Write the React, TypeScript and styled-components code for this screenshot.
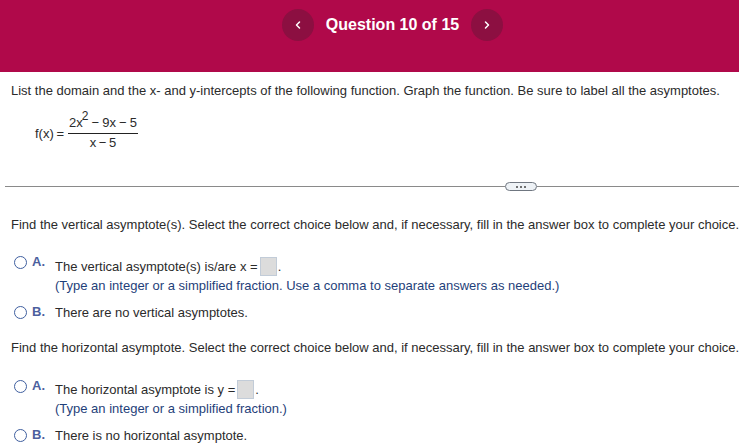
import { createGlobalStyle } from "styled-components";
import styled from "styled-components";
import { ChevronLeft, ChevronRight } from "lucide-react";

const GlobalStyle = createGlobalStyle`
  html, body {
    margin: 0;
    padding: 0;
    background: #fff;
    overflow: hidden;
  }
  body {
    font-family: "Liberation Sans", Arial, sans-serif;
    font-size: 13px;
    color: #2b2b2b;
  }
`;

const Page = styled.div`
  width: 739px;
  height: 448px;
  overflow: hidden;
`;

const Header = styled.header`
  height: 72px;
  background: #b0094a;
  display: flex;
  justify-content: center;
  gap: 11.5px;
  padding: 9px 0 0 46px;
  box-sizing: border-box;
`;

const NavButton = styled.button`
  width: 32px;
  height: 32px;
  border: none;
  padding: 0;
  border-radius: 50%;
  background: #8c0f41;
  color: #fff;
  display: flex;
  align-items: center;
  justify-content: center;
`;

const HeaderTitle = styled.h1`
  margin: 0;
  font-size: 16px;
  font-weight: 700;
  line-height: 32px;
  color: #fff;
  white-space: nowrap;
`;

const Question = styled.section`
  padding: 11px 0 0 11px;
`;

const Line = styled.p`
  margin: 0;
  line-height: 15px;
  white-space: nowrap;
`;

const Formula = styled.div`
  display: flex;
  align-items: center;
  margin: 14px 0 0 24px;
  gap: 4px;
`;

const FunctionName = styled.span`
  padding-top: 4px;
  word-spacing: -1px;
`;

const Fraction = styled.div`
  display: flex;
  flex-direction: column;
  align-items: center;
  width: 70px;
`;

const Numerator = styled.span`
  width: 100%;
  text-align: center;
  line-height: 15px;
  padding-top: 3px;
  padding-bottom: 3px;
  border-bottom: 1px solid #222;
  white-space: nowrap;
  word-spacing: -0.5px;
`;

const Denominator = styled.span`
  line-height: 15px;
  padding-top: 1px;
  word-spacing: -1px;
`;

const Sup = styled.sup`
  font-size: 12px;
  line-height: 0;
  vertical-align: 7px;
  margin-left: -1px;
`;

const Divider = styled.div`
  display: flex;
  align-items: center;
  margin: 32px 0 0 5px;
  height: 9px;
`;

const Rule = styled.div<{ $grow?: boolean }>`
  height: 1px;
  background: #8a8a8a;
  flex: ${(p) => (p.$grow ? "1" : "0 0 auto")};
`;

const TailRule = styled(Rule)`
  width: 202px;
`;

const Pill = styled.div`
  width: 32px;
  height: 9px;
  box-sizing: border-box;
  border: 1px solid #6f7680;
  border-radius: 5px;
  background: #eef2f6;
  display: flex;
  align-items: center;
  justify-content: center;
  gap: 2px;
`;

const Dot = styled.span`
  width: 2px;
  height: 2px;
  background: #444;
  border-radius: 50%;
`;

const Prompt = styled(Line)<{ $top: number }>`
  margin-top: ${(p) => p.$top}px;
  padding-left: 11px;
`;

const Choices = styled.div<{ $top: number }>`
  margin-top: ${(p) => p.$top}px;
  padding-left: 14px;
  display: flex;
  flex-direction: column;
  gap: 12px;
`;

const Choice = styled.div`
  display: flex;
  align-items: flex-start;
`;

const Radio = styled.span`
  width: 13px;
  height: 13px;
  box-sizing: border-box;
  border: 1.5px solid #3f5f9f;
  border-radius: 50%;
  background: #fff;
  flex: none;
  margin-top: 1px;
`;

const Letter = styled.span`
  width: 23px;
  margin-left: 5px;
  flex: none;
  font-weight: 700;
  color: #4c5f9e;
  font-size: 13px;
  line-height: 14px;
`;

const ChoiceBody = styled.div`
  display: flex;
  flex-direction: column;
  gap: 4px;
`;

const ChoiceLine = styled.div<{ $drop?: number }>`
  display: flex;
  align-items: center;
  line-height: 15px;
  white-space: nowrap;
  min-height: 15px;
  padding-top: ${(p) => p.$drop ?? 0}px;
`;

const Hint = styled.div`
  color: #1f3f7a;
  line-height: 15px;
  white-space: nowrap;
`;

const AnswerBox = styled.span`
  width: 17px;
  height: 19px;
  box-sizing: border-box;
  margin: -2px 1px -2px 2px;
  background: #dcdcdc;
  border: 1px solid #c2ccd8;
`;

const App = () => {
  return (
    <Page>
      <GlobalStyle />
      <Header>
        <NavButton aria-label="Previous">
          <ChevronLeft size={12} strokeWidth={3} />
        </NavButton>
        <HeaderTitle>Question 10 of 15</HeaderTitle>
        <NavButton aria-label="Next">
          <ChevronRight size={12} strokeWidth={3} />
        </NavButton>
      </Header>
      <Question>
        <Line>
          List the domain and the x- and y-intercepts of the following function.
          Graph the function. Be sure to label all the asymptotes.
        </Line>
        <Formula>
          <FunctionName>f(x) =</FunctionName>
          <Fraction>
            <Numerator>
              2x<Sup>2</Sup> − 9x − 5
            </Numerator>
            <Denominator>x − 5</Denominator>
          </Fraction>
        </Formula>
      </Question>
      <Divider>
        <Rule $grow />
        <Pill>
          <Dot />
          <Dot />
          <Dot />
        </Pill>
        <TailRule />
      </Divider>
      <Prompt $top={26}>
        Find the vertical asymptote(s). Select the correct choice below and, if
        necessary, fill in the answer box to complete your choice.
      </Prompt>
      <Choices $top={23}>
        <Choice>
          <Radio />
          <Letter>A.</Letter>
          <ChoiceBody>
            <ChoiceLine $drop={4}>
              The vertical asymptote(s) is/are x =<AnswerBox />.
            </ChoiceLine>
            <Hint>
              (Type an integer or a simplified fraction. Use a comma to separate
              answers as needed.)
            </Hint>
          </ChoiceBody>
        </Choice>
        <Choice>
          <Radio />
          <Letter>B.</Letter>
          <ChoiceLine>There are no vertical asymptotes.</ChoiceLine>
        </Choice>
      </Choices>
      <Prompt $top={20}>
        Find the horizontal asymptote. Select the correct choice below and, if
        necessary, fill in the answer box to complete your choice.
      </Prompt>
      <Choices $top={24}>
        <Choice>
          <Radio />
          <Letter>A.</Letter>
          <ChoiceBody>
            <ChoiceLine $drop={3}>
              The horizontal asymptote is y =<AnswerBox />.
            </ChoiceLine>
            <Hint>(Type an integer or a simplified fraction.)</Hint>
          </ChoiceBody>
        </Choice>
        <Choice>
          <Radio />
          <Letter>B.</Letter>
          <ChoiceLine>There is no horizontal asymptote.</ChoiceLine>
        </Choice>
      </Choices>
    </Page>
  );
};

export default App;
